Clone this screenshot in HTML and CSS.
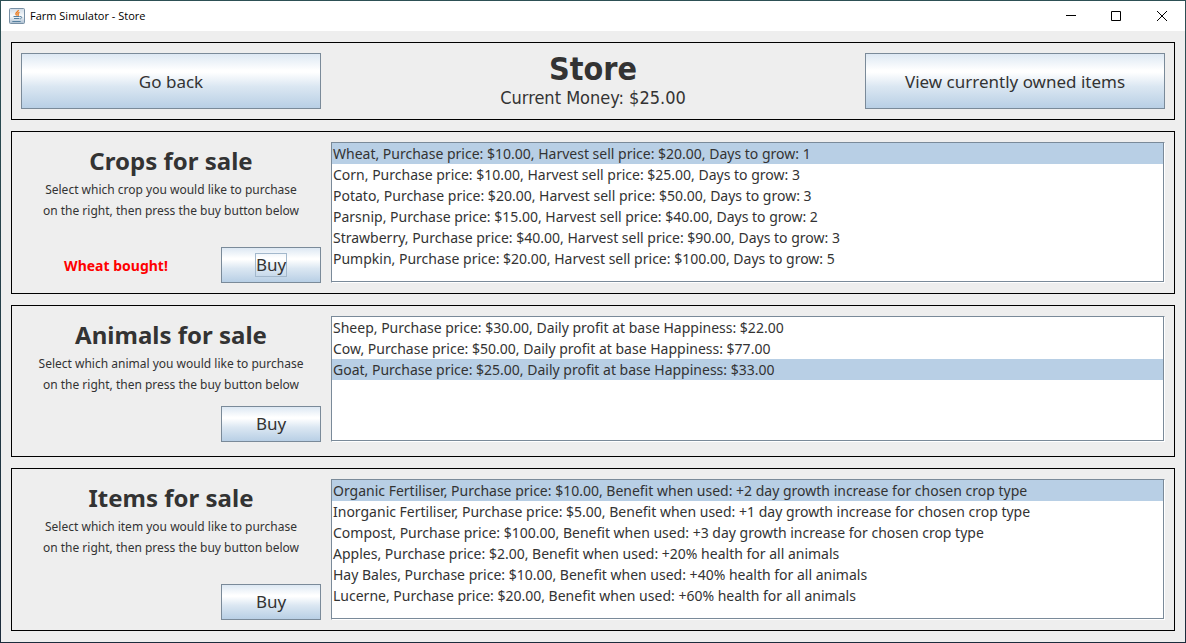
FILE: index.html
```html
<!DOCTYPE html>
<html lang="en">
<head>
<meta charset="utf-8">
<title>Farm Simulator - Store</title>
<link rel="stylesheet" href="styles.css">
</head>
<body>
<div class="window">
  <header class="titlebar">
    <svg class="app-icon" width="16" height="16" viewBox="0 0 16 16" aria-hidden="true">
      <defs><linearGradient id="tile" x1="0" y1="0" x2="0" y2="1"><stop offset="0" stop-color="#cfdbe6"/><stop offset=".5" stop-color="#f8fafb"/><stop offset="1" stop-color="#a9bdd0"/></linearGradient></defs>
      <rect x=".5" y=".5" width="15" height="15" rx="1" fill="url(#tile)" stroke="#7890a5"/>
      <path d="M9.300 2c.5 1.800-3.300 2.500-2.300 4.300.3.500.8.800.7 1.400M10.500 4.300c-2 .8-1.900 1.500-1.300 2.300.3.500 0 .9-.4 1.200" fill="none" stroke="#ec7a1c" stroke-width="1.400"/>
      <path d="M4.500 8.500h6.200M5 10.500h5.400M3.300 13.500h8.400M11 8.600c2.300-.5 2.300 1.700.2 2.300" fill="none" stroke="#56809f"/>
    </svg>
    <h1 class="caption">Farm Simulator - Store</h1>
    <div class="window-controls">
      <button class="control" type="button" aria-label="Minimize"><svg width="12" height="12" viewBox="0 0 12 12"><path d="M2 5.500h10"/></svg></button>
      <button class="control" type="button" aria-label="Maximize"><svg width="12" height="12" viewBox="0 0 12 12"><path d="M1.500 1.500h9v9h-9z"/></svg></button>
      <button class="control" type="button" aria-label="Close"><svg width="12" height="12" viewBox="0 0 12 12"><path d="M1 1l10 10M11 1L1 11"/></svg></button>
    </div>
  </header>
  <main class="content">
    <section class="panel summary">
      <button class="button nav-button" type="button">Go back</button>
      <div class="heading">
        <h2 class="store-title">Store</h2>
        <p class="money">Current Money: $25.00</p>
      </div>
      <button class="button nav-button" type="button">View currently owned items</button>
    </section>

    <section class="panel sale">
      <div class="sale-info">
        <h2 class="sale-title" id="crops">Crops for sale</h2>
        <p class="hint">Select which crop you would like to purchase<br>on the right, then press the buy button below</p>
        <div class="actions">
          <p class="message" role="status">Wheat bought!</p>
          <button class="button buy focused" type="button"><span class="buy-label">Buy</span></button>
        </div>
      </div>
      <ul class="list" role="listbox" aria-labelledby="crops">
        <li class="row selected" role="option" aria-selected="true">Wheat, Purchase price: $10.00, Harvest sell price: $20.00, Days to grow: 1</li>
        <li class="row" role="option">Corn, Purchase price: $10.00, Harvest sell price: $25.00, Days to grow: 3</li>
        <li class="row" role="option">Potato, Purchase price: $20.00, Harvest sell price: $50.00, Days to grow: 3</li>
        <li class="row" role="option">Parsnip, Purchase price: $15.00, Harvest sell price: $40.00, Days to grow: 2</li>
        <li class="row" role="option">Strawberry, Purchase price: $40.00, Harvest sell price: $90.00, Days to grow: 3</li>
        <li class="row" role="option">Pumpkin, Purchase price: $20.00, Harvest sell price: $100.00, Days to grow: 5</li>
      </ul>
    </section>

    <section class="panel sale compact">
      <div class="sale-info">
        <h2 class="sale-title" id="animals">Animals for sale</h2>
        <p class="hint">Select which animal you would like to purchase<br>on the right, then press the buy button below</p>
        <div class="actions">
          <p class="message" role="status"></p>
          <button class="button buy" type="button"><span class="buy-label">Buy</span></button>
        </div>
      </div>
      <ul class="list" role="listbox" aria-labelledby="animals">
        <li class="row" role="option">Sheep, Purchase price: $30.00, Daily profit at base Happiness: $22.00</li>
        <li class="row" role="option">Cow, Purchase price: $50.00, Daily profit at base Happiness: $77.00</li>
        <li class="row selected" role="option" aria-selected="true">Goat, Purchase price: $25.00, Daily profit at base Happiness: $33.00</li>
      </ul>
    </section>

    <section class="panel sale">
      <div class="sale-info">
        <h2 class="sale-title" id="items">Items for sale</h2>
        <p class="hint">Select which item you would like to purchase<br>on the right, then press the buy button below</p>
        <div class="actions">
          <p class="message" role="status"></p>
          <button class="button buy" type="button"><span class="buy-label">Buy</span></button>
        </div>
      </div>
      <ul class="list" role="listbox" aria-labelledby="items">
        <li class="row selected" role="option" aria-selected="true">Organic Fertiliser, Purchase price: $10.00, Benefit when used: +2 day growth increase for chosen crop type</li>
        <li class="row" role="option">Inorganic Fertiliser, Purchase price: $5.00, Benefit when used: +1 day growth increase for chosen crop type</li>
        <li class="row" role="option">Compost, Purchase price: $100.00, Benefit when used: +3 day growth increase for chosen crop type</li>
        <li class="row" role="option">Apples, Purchase price: $2.00, Benefit when used: +20% health for all animals</li>
        <li class="row" role="option">Hay Bales, Purchase price: $10.00, Benefit when used: +40% health for all animals</li>
        <li class="row" role="option">Lucerne, Purchase price: $20.00, Benefit when used: +60% health for all animals</li>
      </ul>
    </section>
  </main>
</div>
</body>
</html>
```
FILE: styles.css
```css
* {
  box-sizing: border-box;
  margin: 0;
  padding: 0;
}

body {
  padding: 1px;
  background: linear-gradient(#2d5055, #1c2c3c);
  color: #333;
  font-family: Tahoma, "Noto Sans", "DejaVu Sans", sans-serif;
  font-size: 14px;
}

.window {
  background: #eee;
}

.titlebar {
  display: flex;
  align-items: center;
  height: 30px;
  padding-left: 8px;
  background: #fff;
  color: #000;
}

.app-icon {
  flex: none;
}

.caption {
  flex: 1;
  padding-left: 5px;
  font: 400 11px/16px "Segoe UI", "Open Sans", sans-serif;
}

.window-controls {
  display: flex;
}

.control {
  display: flex;
  align-items: center;
  justify-content: center;
  width: 46px;
  height: 30px;
  border: 0;
  background: none;
}

.control path {
  fill: none;
  stroke: #000;
}

.content {
  display: flex;
  flex-direction: column;
  gap: 11px;
  padding: 11px 10px;
}

.panel {
  display: flex;
  gap: 10px;
  padding: 10px 9px;
  border: 1px solid #000;
}

.button {
  border: 1px solid #7a8a99;
  background: linear-gradient(#dde8f3, #fff 30%, #fff 34%, #dbe7f2 60%, #b8cfe5);
  color: #333;
  font-family: inherit;
  font-size: 17px;
}

.nav-button {
  flex: none;
  width: 300px;
  height: 56px;
}

.heading {
  flex: 1;
  font-family: Tahoma, "DejaVu Sans Condensed", "DejaVu Sans", sans-serif;
  text-align: center;
}

.store-title {
  font-size: 32px;
  line-height: 33px;
}

.money {
  font-size: 18px;
  line-height: 23px;
}

.sale-info {
  display: flex;
  flex: none;
  flex-direction: column;
  width: 300px;
  text-align: center;
}

.sale-title {
  font-size: 24px;
  line-height: 37px;
}

.hint {
  font-size: 12px;
  line-height: 21px;
}

.actions {
  display: flex;
  align-items: center;
  gap: 10px;
  margin-top: auto;
}

.message {
  flex: 1;
  color: #f00;
  font-size: 14px;
  font-weight: 700;
}

.buy {
  width: 100px;
  height: 36px;
}

.buy-label {
  display: inline-block;
  border: 1px solid transparent;
  line-height: 22px;
}

.focused .buy-label {
  border-color: #a3b8cc;
}

.list {
  flex: 1;
  min-height: 141px;
  border: 1px solid #7a8a99;
  border-right-color: #fff;
  border-bottom-color: #fff;
  box-shadow: inset -1px -1px #7a8a99;
  padding: 0 1px 1px 0;
  background: #fff;
  list-style: none;
}

.row {
  padding-left: 1px;
  font-size: 14px;
  line-height: 21px;
}

.selected {
  background: #b8cfe5;
}

.compact {
  padding-bottom: 14px;
}

.compact .list {
  min-height: 126px;
}
```
